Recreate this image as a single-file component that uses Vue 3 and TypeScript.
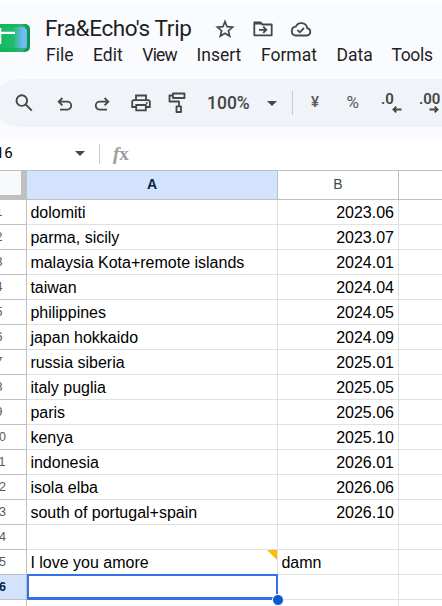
<script setup lang="ts">
interface Row {
  n: number
  place: string
  date: string
}

const menus: string[] = ['File', 'Edit', 'View', 'Insert', 'Format', 'Data', 'Tools']

const rows: Row[] = [
  { n: 1, place: 'dolomiti', date: '2023.06' },
  { n: 2, place: 'parma, sicily', date: '2023.07' },
  { n: 3, place: 'malaysia Kota+remote islands', date: '2024.01' },
  { n: 4, place: 'taiwan', date: '2024.04' },
  { n: 5, place: 'philippines', date: '2024.05' },
  { n: 6, place: 'japan hokkaido', date: '2024.09' },
  { n: 7, place: 'russia siberia', date: '2025.01' },
  { n: 8, place: 'italy puglia', date: '2025.05' },
  { n: 9, place: 'paris', date: '2025.06' },
  { n: 10, place: 'kenya', date: '2025.10' },
  { n: 11, place: 'indonesia', date: '2026.01' },
  { n: 12, place: 'isola elba', date: '2026.06' },
  { n: 13, place: 'south of portugal+spain', date: '2026.10' },
  { n: 14, place: '', date: '' },
  { n: 15, place: 'I love you amore', date: 'damn' },
  { n: 16, place: '', date: '' },
  { n: 17, place: '', date: '' },
]

const activeRow = 16
const notedRow = 15
const isText = (value: string): boolean => Number.isNaN(Number(value))
</script>

<template>
  <div class="app">
    <header class="top">
      <svg class="logo" width="30" height="32" viewBox="0 0 30 32">
        <defs>
          <linearGradient id="tile" x1="0" x2="1">
            <stop offset="0" stop-color="#12b85c" />
            <stop offset="0.62" stop-color="#1fbb6a" />
            <stop offset="0.9" stop-color="#76b9fb" />
            <stop offset="1" stop-color="#6cbbe8" />
          </linearGradient>
        </defs>
        <rect x="-12" y="2" width="42" height="28" rx="5" fill="#0a9851" />
        <path d="M-10 2H22L27 8V25L22 30H-10Z" fill="url(#tile)" />
        <path d="M-10 2H24Q28 3 29 7L26 5H-10ZM-10 30H24L27 26H-10Z" fill="#10b454" opacity=".7" />
        <path d="M0 10.8H15M.2 6V22" stroke="#fff" stroke-width="2.2" />
      </svg>
      <div class="heading">
        <div class="title-row">
          <span class="title">Fra&amp;Echo's Trip</span>
          <svg class="star" width="20" height="20" viewBox="0 0 20 20" fill="none" stroke="#444746" stroke-width="1.7">
            <path d="M10 2.6L12.1 7.7L17.6 8.1L13.4 11.7L14.7 17.1L10 14.2L5.3 17.1L6.6 11.7L2.4 8.1L7.9 7.7Z" />
          </svg>
          <svg class="folder" width="20" height="18" viewBox="0 0 20 18" fill="none" stroke="#444746" stroke-width="1.8">
            <path d="M1.3 4V15.3H18.7V4.5H9.5L7.5 2.5H1.3V4Z" stroke-linejoin="round" />
            <path d="M1 2H7.5L9.5 4.5H1Z" fill="#444746" stroke="none" />
            <path d="M6 9.8H13M10.2 6.7L13.3 9.8L10.2 12.9" />
          </svg>
          <svg class="cloud" width="22" height="16" viewBox="0 0 22 16" fill="none" stroke="#444746" stroke-width="1.8">
            <path d="M5.5 14.5H17.2A3.7 3.7 0 0 0 17.2 7.2A6 6 0 0 0 5.8 5.6A4.5 4.5 0 0 0 5.5 14.5Z" />
            <path d="M7.4 9L9.8 11.3L14 7" />
          </svg>
        </div>
        <nav class="menu">
          <span v-for="m in menus" :key="m" :class="m.toLowerCase()">{{ m }}</span>
        </nav>
      </div>
    </header>

    <div class="toolbar">
      <svg class="search" width="18" height="18" viewBox="0 0 18 18" fill="none" stroke="#444746" stroke-width="1.9">
        <circle cx="6.8" cy="6.6" r="5.3" />
        <path d="M10.6 10.4L16.8 16.6" />
      </svg>
      <svg class="undo" width="16" height="14" viewBox="0 0 16 14" fill="none" stroke="#444746" stroke-width="1.8">
        <path d="M5.4 1L1.7 4.7L5.4 8.4M2 4.7H10.3A3.9 3.9 0 0 1 10.3 12.6H3" />
      </svg>
      <svg class="redo" width="16" height="14" viewBox="0 0 16 14" fill="none" stroke="#444746" stroke-width="1.8">
        <path d="M10.6 1L14.3 4.7L10.6 8.4M14 4.7H5.7A3.9 3.9 0 0 0 5.7 12.6H13" />
      </svg>
      <svg class="print" width="20" height="18" viewBox="0 0 20 18" fill="none" stroke="#444746" stroke-width="1.8">
        <path d="M5 6V1.5H15V6M5 13H1.2V8Q1.2 6.2 3 6.2H17Q18.8 6.2 18.8 8V13H15M5.2 11H14.8V16.4H5.2Z" />
        <circle cx="15.7" cy="9" r="1" fill="#444746" stroke="none" />
      </svg>
      <svg class="roller" width="18" height="22" viewBox="0 0 18 22" fill="none" stroke="#444746" stroke-width="1.8">
        <path d="M5 1.5H16.5V6H5ZM5 3.5H1.5V9.5H11V14M8.5 14.4H13V20H8.5Z" stroke-linejoin="round" />
      </svg>
      <span class="zoom">100%</span>
      <i class="caret"></i>
      <i class="divider"></i>
      <span class="yen">¥</span>
      <span class="percent">%</span>
      <span class="decimal less">.0
        <svg width="10" height="7" viewBox="0 0 10 7" fill="none" stroke="#444746" stroke-width="1.8"><path d="M9.5 3.5H1.5M4.3 .6L1.4 3.5L4.3 6.4" /></svg>
      </span>
      <span class="decimal more">.00
        <svg width="10" height="7" viewBox="0 0 10 7" fill="none" stroke="#444746" stroke-width="1.8"><path d="M.5 3.5H8.5M5.7 .6L8.6 3.5L5.7 6.4" /></svg>
      </span>
    </div>

    <div class="formula">
      <span class="name">A16</span>
      <i class="caret"></i>
      <i class="divider"></i>
      <span class="fx"><em>f</em>x</span>
    </div>

    <div class="grid">
      <div class="corner"></div>
      <div class="col selected">A</div>
      <div class="col">B</div>
      <div class="col"></div>
      <template v-for="r in rows" :key="r.n">
        <div class="num" :class="{ current: r.n === activeRow }">{{ r.n }}</div>
        <div class="cell" :class="{ active: r.n === activeRow, noted: r.n === notedRow }">
          {{ r.place }}<i v-if="r.n === activeRow" class="handle"></i>
        </div>
        <div class="cell" :class="{ figure: !isText(r.date) }">{{ r.date }}</div>
        <div class="cell"></div>
      </template>
    </div>
  </div>
</template>

<style>
body {
  margin: 0;
  overflow: hidden;
}
</style>

<style scoped>
.app {
  width: 442px;
  height: 606px;
  overflow: hidden;
  background: #f9fbfe;
  font-family: Roboto, sans-serif;
  color: #1f1f1f;
}
svg {
  flex: none;
  display: block;
}
.top {
  display: flex;
  height: 78px;
  border-top: 1px solid #fff;
}
.logo {
  margin-top: 21px;
}
.heading {
  margin-left: 15px;
}
.title-row {
  display: flex;
  height: 38px;
  padding-top: 7px;
  box-sizing: border-box;
}
.title {
  width: 147px;
  margin-top: 4px;
  font-size: 22.5px;
  letter-spacing: -0.35px;
  line-height: 32px;
  white-space: nowrap;
}
.star {
  margin: 11px 0 0 22.5px;
}
.folder {
  margin: 12px 0 0 18.5px;
}
.cloud {
  margin: 13px 0 0 17px;
}
.menu {
  display: flex;
  gap: 19.6px;
  padding: 4px 0 0 1px;
  font-size: 17.5px;
  line-height: 24px;
}
.menu .view {
  letter-spacing: -0.8px;
}
.menu .tools {
  margin-left: -1px;
  letter-spacing: -0.3px;
}
.toolbar {
  display: flex;
  height: 48px;
  margin-left: -6px;
  padding-left: 21px;
  border-radius: 24px 0 0 24px;
  background: #f0f3f8;
  color: #444746;
}
.search {
  margin-top: 15px;
}
.undo {
  margin: 18px 0 0 24px;
}
.redo {
  margin: 18px 0 0 20.5px;
}
.print {
  margin: 15px 0 0 21px;
}
.roller {
  margin: 13px 0 0 17.5px;
}
.zoom {
  width: 44px;
  margin-left: 21px;
  font-size: 17.5px;
  font-weight: 500;
  line-height: 49px;
}
.caret {
  flex: none;
  width: 0;
  height: 0;
  border: 5px solid transparent;
  border-top-color: #444746;
  border-bottom: 0;
}
.toolbar .caret {
  margin: 22px 0 0 16px;
}
.divider {
  flex: none;
  width: 1px;
  background: #c7cacf;
}
.toolbar .divider {
  height: 24px;
  margin: 12px 0 0 15px;
}
.yen,
.percent {
  font-size: 16px;
  line-height: 47px;
  color: #5a5d5c;
}
.yen {
  width: 9px;
  margin-left: 18px;
  font-size: 15px;
  font-weight: 500;
}
.percent {
  width: 14px;
  margin-left: 26.5px;
  font-size: 17px;
}
.decimal {
  position: relative;
  flex: none;
  font-size: 15px;
  font-weight: 600;
  line-height: 41px;
}
.decimal svg {
  position: absolute;
  top: 27px;
}
.less {
  width: 21px;
  margin-left: 20.5px;
}
.less svg {
  left: 11px;
}
.more {
  margin-left: 17px;
}
.more svg {
  left: 10px;
}
.formula {
  display: flex;
  height: 33px;
  margin-top: 10px;
  background: #fff;
}
.name {
  width: 27px;
  margin-left: -14px;
  font-size: 15px;
  line-height: 32px;
  color: #000;
}
.formula .caret {
  margin: 14px 0 0 61.5px;
}
.formula .divider {
  height: 20px;
  margin: 7px 0 0 14.5px;
}
.fx {
  margin-left: 13px;
  font: bold 19px/33px "Liberation Serif", serif;
  color: #9a9d9b;
}
.grid {
  display: grid;
  grid-template-columns: 55px 251px 121px 44px;
  grid-template-rows: 30px;
  grid-auto-rows: 25px;
  margin-left: -28px;
  background: #fff;
  font-family: "Liberation Sans", Arial, sans-serif;
}
.corner {
  border: solid #c0c0c0;
  border-width: 1px 6px 5px 0;
  background: #f8f9fa;
}
.col {
  border: solid #c0c0c0;
  border-width: 1px 1px 1px 0;
  font-size: 14px;
  line-height: 27px;
  text-align: center;
  color: #444746;
}
.selected {
  background: #d3e3fd;
  color: #041e49;
  font-weight: bold;
}
.num {
  border: solid #c0c0c0;
  border-width: 0 1px 1px 0;
  font-size: 12.5px;
  line-height: 24px;
  text-align: center;
  color: #575a5a;
}
.current {
  background: #d3e3fd;
  color: #041e49;
  font-weight: bold;
}
.cell {
  position: relative;
  padding: 0 4px 0 3.4px;
  border: solid #e1e1e1;
  border-width: 0 1px 1px 0;
  font-size: 16px;
  line-height: 25px;
  white-space: nowrap;
  color: #000;
}
.figure {
  text-align: right;
}
.noted::after {
  content: "";
  position: absolute;
  top: 0;
  right: 0;
  border: 5px solid #fbbc04;
  border-bottom-color: transparent;
  border-left-color: transparent;
}
.active::before {
  content: "";
  position: absolute;
  z-index: 1;
  inset: -1px -1px -1px 0;
  border: 2px solid #3271ea;
  border-bottom-width: 3px;
}
.handle {
  position: absolute;
  right: -7px;
  bottom: -7px;
  z-index: 2;
  width: 10px;
  height: 10px;
  border: 1px solid #fff;
  border-radius: 50%;
  background: #0b57d0;
}
</style>
